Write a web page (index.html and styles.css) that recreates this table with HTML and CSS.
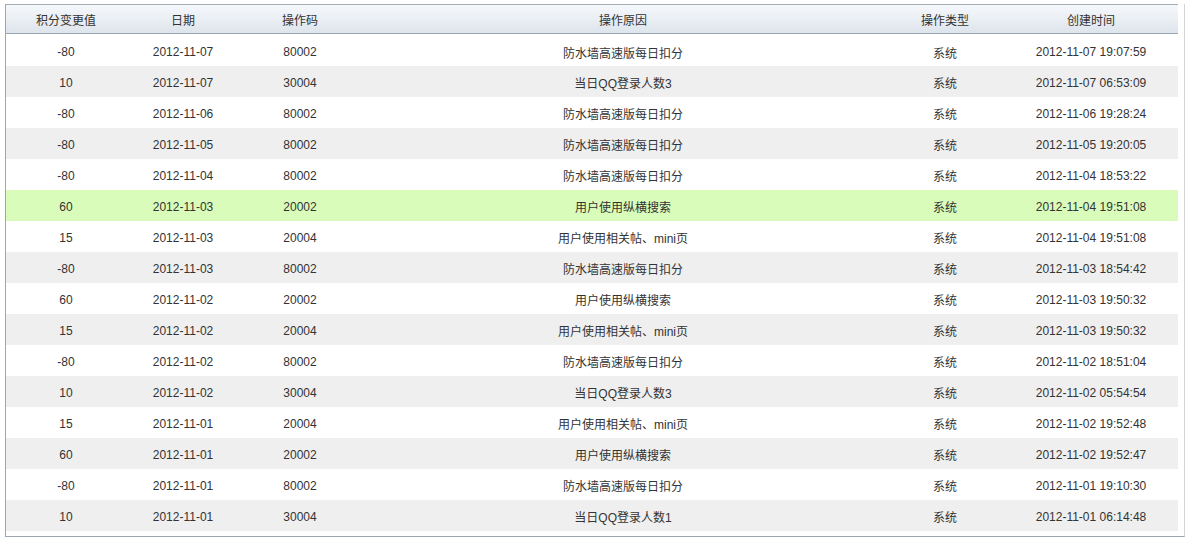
FILE: index.html
```html
<!DOCTYPE html>
<html lang="zh-CN">
<head>
<meta charset="utf-8">
<title>积分变更记录</title>
<link rel="stylesheet" href="styles.css">
</head>
<body>
<div class="grid">
  <table class="tbl">
    <colgroup>
      <col class="c1"><col class="c2"><col class="c3"><col class="c4"><col class="c5"><col class="c6">
    </colgroup>
    <thead>
      <tr><th>积分变更值</th><th>日期</th><th>操作码</th><th>操作原因</th><th>操作类型</th><th>创建时间</th></tr>
    </thead>
    <tbody>
      <tr><td>-80</td><td>2012-11-07</td><td>80002</td><td>防水墙高速版每日扣分</td><td>系统</td><td>2012-11-07 19:07:59</td></tr>
      <tr class="alt"><td>10</td><td>2012-11-07</td><td>30004</td><td>当日QQ登录人数3</td><td>系统</td><td>2012-11-07 06:53:09</td></tr>
      <tr><td>-80</td><td>2012-11-06</td><td>80002</td><td>防水墙高速版每日扣分</td><td>系统</td><td>2012-11-06 19:28:24</td></tr>
      <tr class="alt"><td>-80</td><td>2012-11-05</td><td>80002</td><td>防水墙高速版每日扣分</td><td>系统</td><td>2012-11-05 19:20:05</td></tr>
      <tr><td>-80</td><td>2012-11-04</td><td>80002</td><td>防水墙高速版每日扣分</td><td>系统</td><td>2012-11-04 18:53:22</td></tr>
      <tr class="hl"><td>60</td><td>2012-11-03</td><td>20002</td><td>用户使用纵横搜索</td><td>系统</td><td>2012-11-04 19:51:08</td></tr>
      <tr><td>15</td><td>2012-11-03</td><td>20004</td><td>用户使用相关帖、mini页</td><td>系统</td><td>2012-11-04 19:51:08</td></tr>
      <tr class="alt"><td>-80</td><td>2012-11-03</td><td>80002</td><td>防水墙高速版每日扣分</td><td>系统</td><td>2012-11-03 18:54:42</td></tr>
      <tr><td>60</td><td>2012-11-02</td><td>20002</td><td>用户使用纵横搜索</td><td>系统</td><td>2012-11-03 19:50:32</td></tr>
      <tr class="alt"><td>15</td><td>2012-11-02</td><td>20004</td><td>用户使用相关帖、mini页</td><td>系统</td><td>2012-11-03 19:50:32</td></tr>
      <tr><td>-80</td><td>2012-11-02</td><td>80002</td><td>防水墙高速版每日扣分</td><td>系统</td><td>2012-11-02 18:51:04</td></tr>
      <tr class="alt"><td>10</td><td>2012-11-02</td><td>30004</td><td>当日QQ登录人数3</td><td>系统</td><td>2012-11-02 05:54:54</td></tr>
      <tr><td>15</td><td>2012-11-01</td><td>20004</td><td>用户使用相关帖、mini页</td><td>系统</td><td>2012-11-02 19:52:48</td></tr>
      <tr class="alt"><td>60</td><td>2012-11-01</td><td>20002</td><td>用户使用纵横搜索</td><td>系统</td><td>2012-11-02 19:52:47</td></tr>
      <tr><td>-80</td><td>2012-11-01</td><td>80002</td><td>防水墙高速版每日扣分</td><td>系统</td><td>2012-11-01 19:10:30</td></tr>
      <tr class="alt"><td>10</td><td>2012-11-01</td><td>30004</td><td>当日QQ登录人数1</td><td>系统</td><td>2012-11-01 06:14:48</td></tr>
    </tbody>
  </table>
</div>
</body>
</html>
```
FILE: styles.css
```css
html, body {
  margin: 0;
  padding: 0;
  background: #fff;
}

body {
  font-family: "Liberation Sans", "Noto Sans CJK SC", sans-serif;
  font-size: 12px;
  color: #333;
}

.grid {
  margin: 4px 0 0 5px;
  width: 1178px;
  border-left: 1px solid #9ba6b0;
  border-bottom: 1px solid #9ba6b0;
  border-right: 1px solid #d4d4d4;
  padding-bottom: 5px;
}

.tbl {
  width: 1172px;
  border-collapse: separate;
  border-spacing: 0;
  table-layout: fixed;
}

.c1 { width: 120px; }
.c2 { width: 114px; }
.c3 { width: 120px; }
.c4 { width: 526px; }
.c5 { width: 118px; }
.c6 { width: 174px; }

.tbl th {
  height: 28px;
  padding: 0;
  font-weight: normal;
  text-align: center;
  color: #333;
  background: linear-gradient(to bottom, #f5f8fb 0%, #e9eef3 55%, #dde4eb 100%);
  border-top: 1px solid #a4adb6;
  border-bottom: 1px solid #9ba6b0;
}

.tbl td {
  height: 31px;
  padding: 2px 0 0;
  box-sizing: border-box;
  text-align: center;
  white-space: nowrap;
}

.tbl tbody tr:first-child td {
  height: 32px;
  padding-top: 4px;
}

.tbl tr.alt td {
  background: #efefef;
}

.tbl tr.hl td {
  background: #dafcba;
}
```
